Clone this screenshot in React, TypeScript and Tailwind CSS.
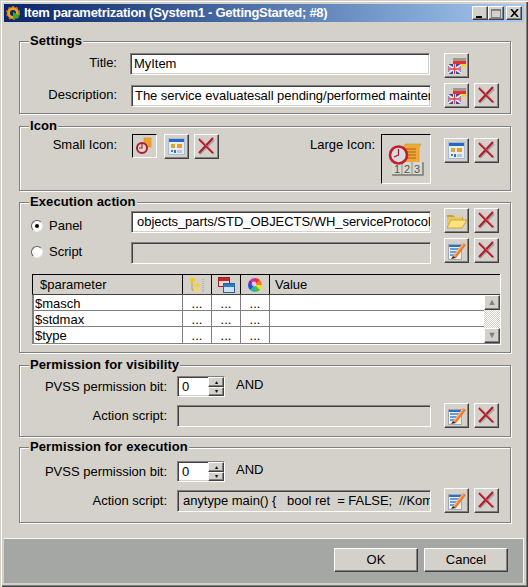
import React from 'react';

const FONT = "font-['Liberation_Sans',Arial,sans-serif] text-[13px] text-black";
const BOLD = "font-['Liberation_Sans',Arial,sans-serif] font-bold text-[13px] tracking-[0.1px]";
const GROUP = 'relative mx-[15px] w-[492px] border border-[#7f7f7f] shadow-[1px_1px_0_#fff,inset_1px_1px_0_#fff]';
const RAISED =
  'flex items-center justify-center bg-[#d3d1c9] border border-t-white border-l-white border-r-[#404040] border-b-[#404040] shadow-[inset_-1px_-1px_0_#808080]';
const SUNKEN =
  'border border-t-[#808080] border-l-[#808080] border-r-white border-b-white shadow-[inset_1px_1px_0_#404040,inset_-1px_-1px_0_#d4d0c8]';

function XIcon() {
  return (
    <svg width="19" height="19" viewBox="0 0 19 19">
      <path d="M3 3 L17 17 M17 3 L3 17" stroke="#a9a9a2" strokeWidth="2" />
      <path d="M2 2 L16 16 M16 1 L2 16" stroke="#b01c30" strokeWidth="2.2" />
      <path d="M3 2 L16 15" stroke="#d9707c" strokeWidth="0.7" />
    </svg>
  );
}

function FlagsIcon() {
  return (
    <svg width="19" height="19" viewBox="0 0 19 19">
      <rect x="6" y="2" width="13" height="3" fill="#9a9a94" />
      <rect x="6" y="5" width="13" height="3" fill="#e83030" />
      <rect x="6" y="8" width="13" height="3" fill="#f6d810" />
      <rect x="1" y="8" width="13" height="10" rx="2" fill="#3a4a98" />
      <path d="M1 9 L14 17 M14 9 L1 17" stroke="#f0e8e8" strokeWidth="1.8" />
      <path d="M7.5 8 V18 M1 13 H14" stroke="#f4f0f0" strokeWidth="3" />
      <path d="M7.5 8 V18 M1 13 H14" stroke="#d84050" strokeWidth="1.4" />
    </svg>
  );
}

function GalleryIcon() {
  return (
    <svg width="19" height="19" viewBox="0 0 19 19">
      <rect x="1.5" y="1.5" width="16" height="16" fill="#e4ecf6" stroke="#a8bcd4" />
      <rect x="2" y="2" width="15" height="3" fill="#2a68b8" />
      <rect x="4" y="7" width="4" height="4" fill="#e0a828" />
      <rect x="10" y="7" width="5" height="4" fill="#f09828" />
      <rect x="4" y="13" width="2" height="2" fill="#30a848" />
      <rect x="7" y="13" width="2" height="3" fill="#5060d8" />
      <rect x="10" y="13" width="5" height="3" fill="#c0c4cc" />
    </svg>
  );
}

function FolderIcon() {
  return (
    <svg width="21" height="19" viewBox="0 0 21 19">
      <path d="M1 4 H7 L9 6 H17 V9 H1 Z" fill="#c8a040" />
      <path d="M1 17 L1 6 H16 V9 Z" fill="#e8c860" />
      <path d="M1 17 L5 9 H21 L16 17 Z" fill="#fbe47c" stroke="#c09838" strokeWidth="0.8" />
    </svg>
  );
}

function EditIcon() {
  return (
    <svg width="21" height="20" viewBox="0 0 21 20">
      <rect x="2.5" y="3.5" width="13" height="15" fill="#f0f0f0" stroke="#a8a8a8" />
      <rect x="3" y="4" width="12" height="2" fill="#2a70c8" />
      <path d="M4 8 H13 M4 11 H11 M4 14 H9" stroke="#3a80d8" strokeWidth="1.5" />
      <path d="M7 15 L17 2 L20 4 L10 17 Z" fill="#f07828" />
      <path d="M7 15 L17 2 L18 3 L8 16 Z" fill="#fbb878" />
      <path d="M7 15 L5 18 L10 17 Z" fill="#303030" />
    </svg>
  );
}

function SmallClockIcon() {
  return (
    <svg width="19" height="19" viewBox="0 0 19 19">
      <rect x="9" y="1" width="7" height="9" fill="#f0a030" stroke="#c89030" strokeWidth="0.6" />
      <circle cx="7" cy="11" r="5" fill="#d8d8d8" stroke="#b01c28" strokeWidth="2" />
      <path d="M7 7 V11 L4 11" stroke="#a02020" strokeWidth="1.1" fill="none" />
    </svg>
  );
}

function LargeClockIcon() {
  return (
    <svg width="36" height="33" viewBox="0 0 36 33">
      <path d="M17 1 H33 L31 5 V20 H15 V5 Z" fill="#f0a838" stroke="#c89838" strokeWidth="0.6" />
      <path d="M18 6 H28 M18 9 H28 M18 12 H28 M18 15 H28" stroke="#a86010" strokeWidth="1" />
      <rect x="4" y="19" width="32" height="14" rx="1" fill="#8e8e88" />
      <rect x="4" y="19" width="30" height="12" fill="#d8d8d2" />
      <path d="M14 19 V31 M24 19 V31" stroke="#8e8e88" />
      <text x="6" y="29.5" fontSize="11" fontFamily="Liberation Sans" fill="#555">1</text>
      <text x="16" y="29.5" fontSize="11" fontFamily="Liberation Sans" fill="#555">2</text>
      <text x="26" y="29.5" fontSize="11" fontFamily="Liberation Sans" fill="#555">3</text>
      <circle cx="10.5" cy="12" r="8.5" fill="#d8dce0" stroke="#c0202c" strokeWidth="2.6" />
      <path d="M10.5 6 V12 L6 14" stroke="#b02020" strokeWidth="1.3" fill="none" />
    </svg>
  );
}

function TreeIcon() {
  return (
    <svg width="16" height="16" viewBox="0 0 16 16">
      <rect x="1" y="1" width="5" height="4" fill="#f0c838" />
      <rect x="5" y="6" width="6" height="4" fill="#f0d050" />
      <rect x="5" y="11" width="6" height="4" fill="#f0d878" />
      <path d="M3 5 V13 H5" stroke="#b8a060" fill="none" />
      <path d="M14 2 V15" stroke="#9a9a92" strokeDasharray="1 1" />
    </svg>
  );
}

function WindowsIcon() {
  return (
    <svg width="17" height="16" viewBox="0 0 17 16">
      <rect x="0.5" y="0.5" width="11" height="9" fill="#e8d8d8" stroke="#a02020" />
      <rect x="1" y="1" width="10" height="3" fill="#c02828" />
      <rect x="5.5" y="6.5" width="11" height="9" fill="#cfe0f4" stroke="#2860a8" />
      <rect x="6" y="7" width="10" height="3" fill="#3078c8" />
    </svg>
  );
}

function ColorWheel() {
  const colors = ['#f03030', '#f08020', '#f0e020', '#50c030', '#20b8a0', '#2050d0', '#7030b0', '#d030a0'];
  return (
    <svg width="14" height="14" viewBox="-7 -7 14 14">
      {colors.map((c, i) => {
        const a1 = ((i - 2) * Math.PI) / 4;
        const a2 = ((i - 1) * Math.PI) / 4;
        return (
          <path
            key={c}
            d={`M0 0 L${7 * Math.cos(a1)} ${7 * Math.sin(a1)} A7 7 0 0 1 ${7 * Math.cos(a2)} ${7 * Math.sin(a2)} Z`}
            fill={c}
          />
        );
      })}
      <circle cx="-1" cy="-1" r="2.4" fill="#fff" opacity="0.7" />
    </svg>
  );
}

function IconButton({ children, className = '' }: { children: React.ReactNode; className?: string }) {
  return <div className={`${RAISED} w-[25px] h-[25px] shrink-0 ${className}`}>{children}</div>;
}

function Field({ text, className = '', disabled = false }: { text?: string; className?: string; disabled?: boolean }) {
  return (
    <div
      className={`${SUNKEN} h-[22px] leading-[20px] tracking-[-0.04px] whitespace-pre overflow-hidden shrink-0 ${
        disabled ? 'bg-[#d3d1c9]' : 'bg-white'
      } ${className}`}
    >
      {text}
    </div>
  );
}

function Legend({ children }: { children: React.ReactNode }) {
  return <div className={`${BOLD} absolute left-[9px] -top-[9px] bg-[#d3d1c9] px-[1px] leading-[16px]`}>{children}</div>;
}

function Radio({ checked }: { checked?: boolean }) {
  return (
    <div className="w-[12px] h-[12px] rounded-full bg-white flex items-center justify-center border border-t-[#606060] border-l-[#606060] border-r-[#e8e8e8] border-b-[#e8e8e8] shrink-0">
      {checked && <div className="w-[4px] h-[4px] rounded-full bg-black" />}
    </div>
  );
}

function Spinner() {
  return (
    <div className={`${SUNKEN} bg-white w-[48px] h-[21px] ml-[10px] flex pl-[4px] leading-[19px] shrink-0`}>
      <span className="flex-1">0</span>
      <div className="w-[16px] flex flex-col">
        <div className={`${RAISED} h-[10px] text-[6px] leading-none`}>▴</div>
        <div className={`${RAISED} h-[9px] text-[6px] leading-none`}>▾</div>
      </div>
    </div>
  );
}

function PermissionGroup({ title, script, className }: { title: string; script?: string; className: string }) {
  return (
    <div className={`${GROUP} ${className} flex flex-col`}>
      <Legend>{title}</Legend>
      <div className="flex items-center h-[22px]">
        <div className="w-[147px] text-right whitespace-nowrap mt-[2px]">PVSS permission bit:</div>
        <Spinner />
        <div className="ml-[11px] -mt-[2px]">AND</div>
      </div>
      <div className="flex items-center h-[25px] mt-[6px]">
        <div className="w-[147px] text-right whitespace-nowrap">Action script:</div>
        <Field text={script} disabled className="w-[254px] ml-[10px] pl-[5px]" />
        <IconButton className="ml-[13px]"><EditIcon /></IconButton>
        <IconButton className="ml-[5px]"><XIcon /></IconButton>
      </div>
    </div>
  );
}

const PARAMS = ['$masch', '$stdmax', '$type'];

export default function App() {
  return (
    <div
      className={`${FONT} w-[528px] h-[587px] bg-[#d3d1c9] flex flex-col p-[4px] overflow-hidden shadow-[inset_1px_1px_0_#d4d0c8,inset_2px_2px_0_#fff,inset_-1px_-1px_0_#404040,inset_-2px_-2px_0_#808080]`}
    >
      {/* title bar */}
      <div className="h-[18px] flex items-center bg-gradient-to-r from-[#0a246a] to-[#a6caf0] pl-[2px] pr-[2px] shrink-0">
        <svg width="15" height="15" viewBox="0 0 15 15" className="shrink-0">
          <circle cx="7" cy="7" r="4.5" fill="none" stroke="#f0a020" strokeWidth="3" />
          <circle cx="7" cy="7" r="6.3" fill="none" stroke="#d07810" strokeWidth="1.6" strokeDasharray="2 2" />
          <path d="M7 6 L14 10 L7 14 Z" fill="#30b030" />
        </svg>
        <div className="font-['Liberation_Sans',Arial,sans-serif] font-bold text-[13px] text-white ml-[3px] flex-1 whitespace-nowrap leading-[18px] tracking-[-0.27px]">
          Item parametrization (System1 - GettingStarted; #8)
        </div>
        <div className={`${RAISED} w-[16px] h-[14px]`}>
          <div className="w-[6px] h-[2px] bg-black mt-[7px] -ml-[2px]" />
        </div>
        <div className={`${RAISED} w-[16px] h-[14px]`}>
          <div className="w-[10px] h-[9px] border border-[#808080] border-t-2" />
        </div>
        <div className={`${RAISED} w-[16px] h-[14px] ml-[2px]`}>
          <svg width="9" height="8" viewBox="0 0 9 8">
            <path d="M1 0 L8 8 M8 0 L1 8" stroke="#000" strokeWidth="1.6" />
          </svg>
        </div>
      </div>

      {/* Settings */}
      <div className={`${GROUP} h-[73px] mt-[19px] pt-[11px] shrink-0`}>
        <Legend>Settings</Legend>
        <div className="flex h-[30px] items-start">
          <div className="w-[97px] text-right">Title:</div>
          <Field text="MyItem" className="w-[300px] ml-[13px] pl-[3px]" />
          <IconButton className="ml-[14px]"><FlagsIcon /></IconButton>
        </div>
        <div className="flex h-[25px] items-start">
          <div className="w-[97px] text-right mt-[2px]">Description:</div>
          <Field
            text="The service evaluatesall pending/performed maintenance actions"
            className="w-[300px] ml-[14px] mt-[2px] pl-[3px]"
          />
          <IconButton className="ml-[13px]"><FlagsIcon /></IconButton>
          <IconButton className="ml-[5px]"><XIcon /></IconButton>
        </div>
      </div>

      {/* Icon */}
      <div className={`${GROUP} h-[65px] mt-[12px] pt-[7px] flex shrink-0`}>
        <Legend>Icon</Legend>
        <div className="w-[97px] text-right mt-[1px] whitespace-nowrap">Small Icon:</div>
        <div className="w-[25px] h-[24px] ml-[15px] border border-t-black border-l-black border-r-white border-b-white flex items-center justify-center">
          <SmallClockIcon />
        </div>
        <IconButton className="ml-[7px]"><GalleryIcon /></IconButton>
        <IconButton className="ml-[5px]"><XIcon /></IconButton>
        <div className="ml-[91px] w-[64px] mt-[1px] whitespace-nowrap">Large Icon:</div>
        <div className="w-[50px] h-[50px] ml-[7px] border border-t-black border-l-black border-r-white border-b-white flex items-center justify-center">
          <LargeClockIcon />
        </div>
        <div className="flex mt-[4px] ml-[13px] h-[25px]">
          <IconButton><GalleryIcon /></IconButton>
          <IconButton className="ml-[5px]"><XIcon /></IconButton>
        </div>
      </div>

      {/* Execution action */}
      <div className={`${GROUP} h-[151px] mt-[11px] pt-[5px] shrink-0`}>
        <Legend>Execution action</Legend>
        <div className="flex h-[30px] items-start">
          <div className="flex items-center ml-[11px] w-[100px] h-[25px] gap-[6px] mt-[5px]">
            <Radio checked />
            <span>Panel</span>
          </div>
          <Field text="objects_parts/STD_OBJECTS/WH_serviceProtocol" className="w-[300px] mt-[3px] pl-[5px]" />
          <IconButton className="ml-[13px]"><FolderIcon /></IconButton>
          <IconButton className="ml-[5px]"><XIcon /></IconButton>
        </div>
        <div className="flex h-[25px] items-start">
          <div className="flex items-center ml-[11px] w-[100px] h-[25px] gap-[6px] mt-[1px]">
            <Radio />
            <span>Script</span>
          </div>
          <Field disabled className="w-[300px] mt-[4px]" />
          <IconButton className="ml-[13px]"><EditIcon /></IconButton>
          <IconButton className="ml-[5px]"><XIcon /></IconButton>
        </div>

        {/* parameter table */}
        <div className="ml-[12px] mt-[11px] w-[469px] h-[71px] border-r border-b border-white flex flex-col">
          <div className="h-[21px] flex border-t border-t-black border-b border-b-[#404040] shrink-0">
            <div className="w-[150px] border-l border-l-black pl-[7px] leading-[19px]">$parameter</div>
            <div className="w-[29px] border-l border-l-black flex items-center justify-center"><TreeIcon /></div>
            <div className="w-[29px] border-l border-l-black flex items-center justify-center"><WindowsIcon /></div>
            <div className="w-[29px] border-l border-l-black flex items-center justify-center"><ColorWheel /></div>
            <div className="flex-1 border-l border-l-black pl-[5px] leading-[19px]">Value</div>
          </div>
          <div className="flex flex-1 border-l-2 border-[#808080] border-b">
            <div className="flex-1 flex flex-col">
              {PARAMS.map(p => (
                <div key={p} className="flex h-[16px] bg-white border-b border-[#808080] last:border-b-0 leading-[17px]">
                  <div className="w-[148px] pl-[1px]">{p}</div>
                  {[0, 1, 2].map(i => (
                    <div key={i} className="w-[29px] border-l border-[#808080] text-center leading-[18px] overflow-hidden">...</div>
                  ))}
                  <div className="flex-1 border-l border-[#808080]" />
                </div>
              ))}
            </div>
            <div className="w-[16px] flex flex-col">
              <div className={`${RAISED} h-[15px] text-[#808080] text-[9px] leading-none`}>▲</div>
              <div className="flex-1 bg-[repeating-conic-gradient(#d4d0c8_0_25%,#fff_0_50%)] bg-[length:2px_2px]" />
              <div className={`${RAISED} h-[15px] text-[#808080] text-[9px] leading-none`}>▼</div>
            </div>
          </div>
        </div>
      </div>

      <PermissionGroup title="Permission for visibility" className="h-[72px] mt-[12px] pt-[9px] shrink-0" />
      <PermissionGroup
        title="Permission for execution"
        script="anytype main() {   bool ret  = FALSE;  //Kommentar"
        className="h-[76px] mt-[10px] pt-[12px] shrink-0"
      />

      {/* footer */}
      <div className="mt-auto h-[45px] bg-[#a5a7a5] border-t border-r border-[#f4f4f0] flex justify-end items-start gap-[6px] pt-[9px] pr-[15px] shrink-0">
        <div className={`${RAISED} w-[84px] h-[24px]`}>OK</div>
        <div className={`${RAISED} w-[84px] h-[24px]`}>Cancel</div>
      </div>
    </div>
  );
}
